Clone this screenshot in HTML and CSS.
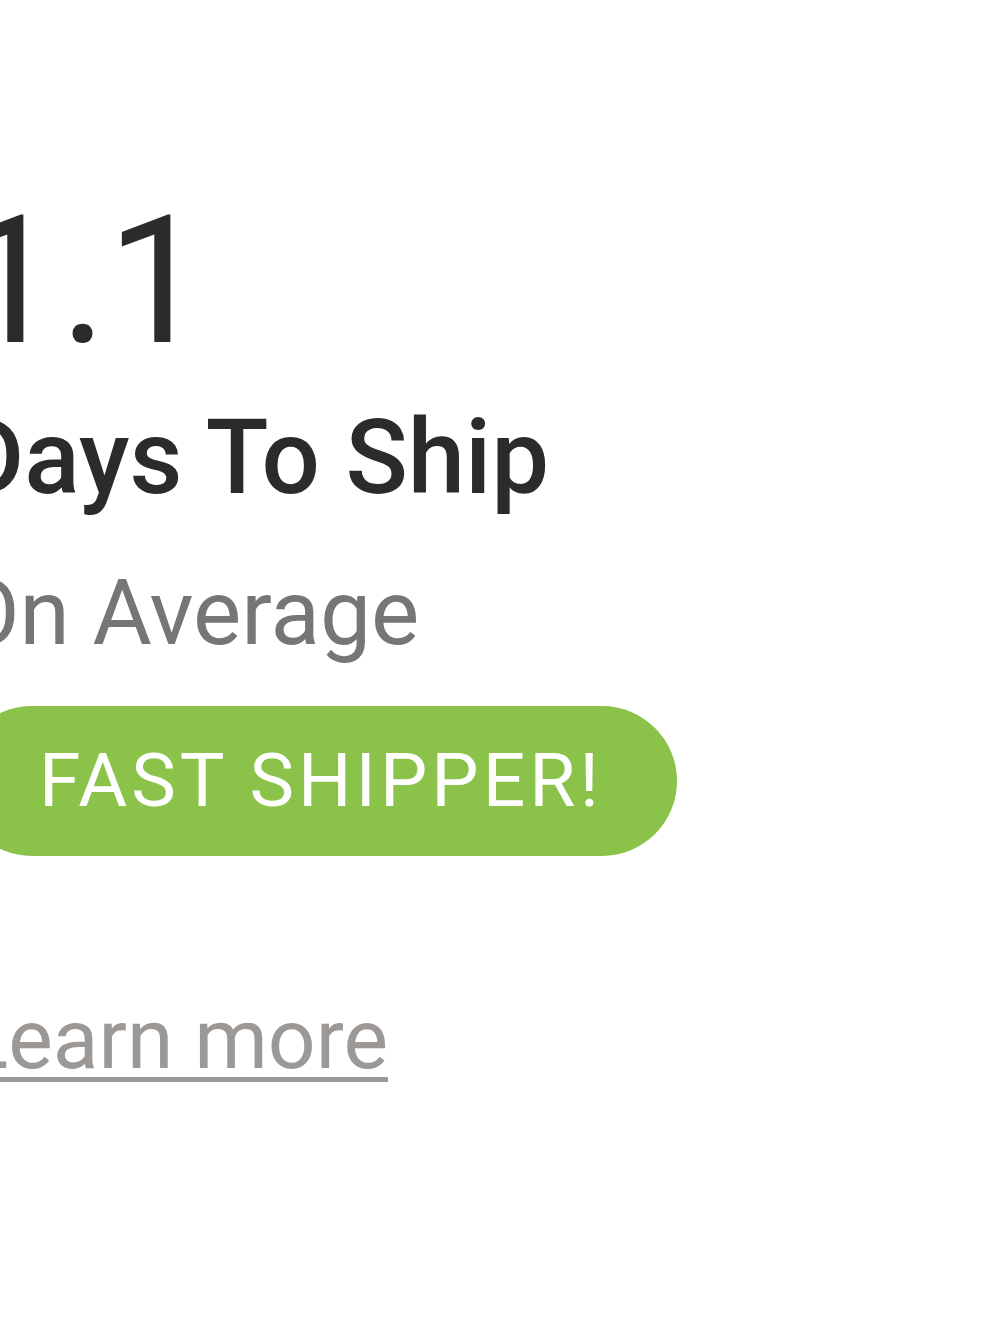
FILE: index.html
```html
<!DOCTYPE html>
<html lang="en">

<head>
    <meta charset="UTF-8">
    <meta name="viewport" content="width=device-width, initial-scale=1.0">
    <title>Shipping Stats</title>
    <link rel="stylesheet" href="styles.css">
</head>

<body>
    <div class="ship-card">
        <div class="ship-value">1.1</div>
        <div class="ship-label">Days To Ship</div>
        <div class="ship-sub">On Average</div>
        <div class="ship-badge">FAST SHIPPER!</div>
        <a class="ship-link" href="#">Learn more</a>
    </div>
</body>

</html>
```

FILE: styles.css
```css
body {
    font-family: Roboto, "Noto Sans", Arial, sans-serif;
    margin: 0;
    background-color: #fff;
    overflow: hidden;
}

.ship-card {
    display: flex;
    flex-direction: column;
    align-items: flex-start;
    margin-left: -43px;
    padding-top: 192px;
}

.ship-value {
    margin-left: 3px;
    font-size: 178px;
    line-height: 1;
    color: #2b2b2b;
}

.ship-label {
    margin-top: 26px;
    font-size: 103px;
    font-weight: 500;
    line-height: 1.2;
    color: #2b2b2b;
}

.ship-sub {
    margin-top: 39px;
    font-size: 91px;
    line-height: 1.2;
    color: #767676;
}

.ship-badge {
    display: flex;
    align-items: center;
    height: 150px;
    margin-top: 38px;
    padding: 0 74px 0 82px;
    border-radius: 75px;
    background-color: #8bc34a;
    color: #fff;
    font-size: 75px;
    line-height: 1;
    letter-spacing: 4px;
}

.ship-link {
    margin-top: 134px;
    margin-left: 6px;
    font-size: 84px;
    line-height: 1.2;
    color: #9c9896;
    text-decoration: underline;
    text-decoration-thickness: 5px;
    text-underline-offset: 9px;
}
```
